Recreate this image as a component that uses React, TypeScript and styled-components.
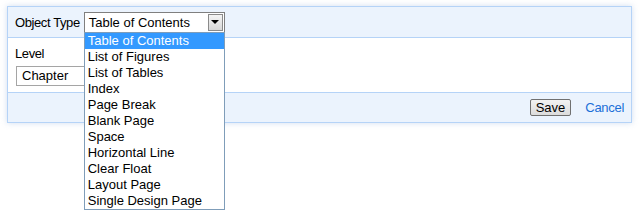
import React from "react";
import styled, { createGlobalStyle } from "styled-components";

const OPTIONS = [
  "Table of Contents",
  "List of Figures",
  "List of Tables",
  "Index",
  "Page Break",
  "Blank Page",
  "Space",
  "Horizontal Line",
  "Clear Float",
  "Layout Page",
  "Single Design Page",
];

const GlobalStyle = createGlobalStyle`
  html, body {
    margin: 0;
    padding: 0;
    background: #ffffff;
  }
  body {
    font-family: "Liberation Sans", Arial, sans-serif;
    font-size: 13px;
    color: #000;
  }
`;

const Page = styled.div`
  min-height: 216px;
  padding: 6px 8px 0 7px;
  box-sizing: border-box;
`;

const Panel = styled.div`
  width: 623px;
  border: 1px solid #b5d3f7;
  box-shadow: 0 0 6px rgba(150, 180, 220, 0.45);
  background: #fff;
`;

const Header = styled.div`
  display: flex;
  align-items: center;
  height: 30px;
  padding-left: 7px;
  background: #ebf3fd;
  border-bottom: 1px solid #b5d3f7;
`;

const Label = styled.span`
  margin-right: 4px;
  letter-spacing: -0.4px;
`;

const SelectWrap = styled.div`
  position: relative;
`;

const Select = styled.div`
  display: flex;
  align-items: center;
  width: 139px;
  height: 19px;
  border: 1px solid #7f7f7f;
  background: #fff;
`;

const SelectValue = styled.span`
  flex: 1;
  padding-left: 4px;
  white-space: nowrap;
`;

const ArrowButton = styled.div`
  display: flex;
  align-items: center;
  justify-content: center;
  width: 15px;
  height: 17px;
  margin-right: 1px;
  border: 1px solid #8a8a8a;
  background: linear-gradient(#f4f4f4, #d8d8d8);
  box-sizing: border-box;
`;

const Arrow = styled.span`
  width: 0;
  height: 0;
  border-left: 4px solid transparent;
  border-right: 4px solid transparent;
  border-top: 4px solid #000;
`;

const DropList = styled.ul`
  position: absolute;
  top: 20px;
  left: 0;
  width: 139px;
  margin: 0;
  padding: 0;
  list-style: none;
  background: #fff;
  border: 1px solid #7f9db9;
  z-index: 10;
`;

const Option = styled.li<{ $active?: boolean }>`
  height: 16px;
  line-height: 16px;
  padding-left: 3px;
  white-space: nowrap;
  background: ${(p) => (p.$active ? "#3399ff" : "transparent")};
  color: ${(p) => (p.$active ? "#fff" : "#000")};
`;

const Body = styled.div`
  height: 54px;
  padding: 8px 0 0 7px;
  box-sizing: border-box;
`;

const LevelLabel = styled.div`
  line-height: 15px;
  margin-bottom: 5px;
  letter-spacing: -0.4px;
`;

const Input = styled.div`
  width: 140px;
  height: 18px;
  line-height: 18px;
  margin-left: 1px;
  padding-left: 5px;
  border: 1px solid #a5a5a5;
`;

const Footer = styled.div`
  display: flex;
  align-items: center;
  justify-content: flex-end;
  height: 29px;
  padding-right: 7px;
  background: #ebf3fd;
  border-top: 1px solid #b5d3f7;
`;

const SaveButton = styled.button`
  font-family: "Liberation Sans", Arial, sans-serif;
  font-size: 13px;
  height: 17px;
  padding: 0 5px;
  border: 1px solid #707070;
  border-radius: 2px;
  background: linear-gradient(#f2f2f2, #dcdcdc);
  color: #000;
  line-height: 13px;
`;

const CancelLink = styled.a`
  margin-left: 14px;
  letter-spacing: -0.3px;
  color: #1b6fd8;
  text-decoration: none;
`;

export default function App() {
  return (
    <>
      <GlobalStyle />
      <Page>
        <Panel>
          <Header>
            <Label>Object Type</Label>
            <SelectWrap>
              <Select>
                <SelectValue>Table of Contents</SelectValue>
                <ArrowButton>
                  <Arrow />
                </ArrowButton>
              </Select>
              <DropList>
                {OPTIONS.map((o, i) => (
                  <Option key={o} $active={i === 0}>
                    {o}
                  </Option>
                ))}
              </DropList>
            </SelectWrap>
          </Header>
          <Body>
            <LevelLabel>Level</LevelLabel>
            <Input>Chapter</Input>
          </Body>
          <Footer>
            <SaveButton>Save</SaveButton>
            <CancelLink href="#">Cancel</CancelLink>
          </Footer>
        </Panel>
      </Page>
    </>
  );
}
